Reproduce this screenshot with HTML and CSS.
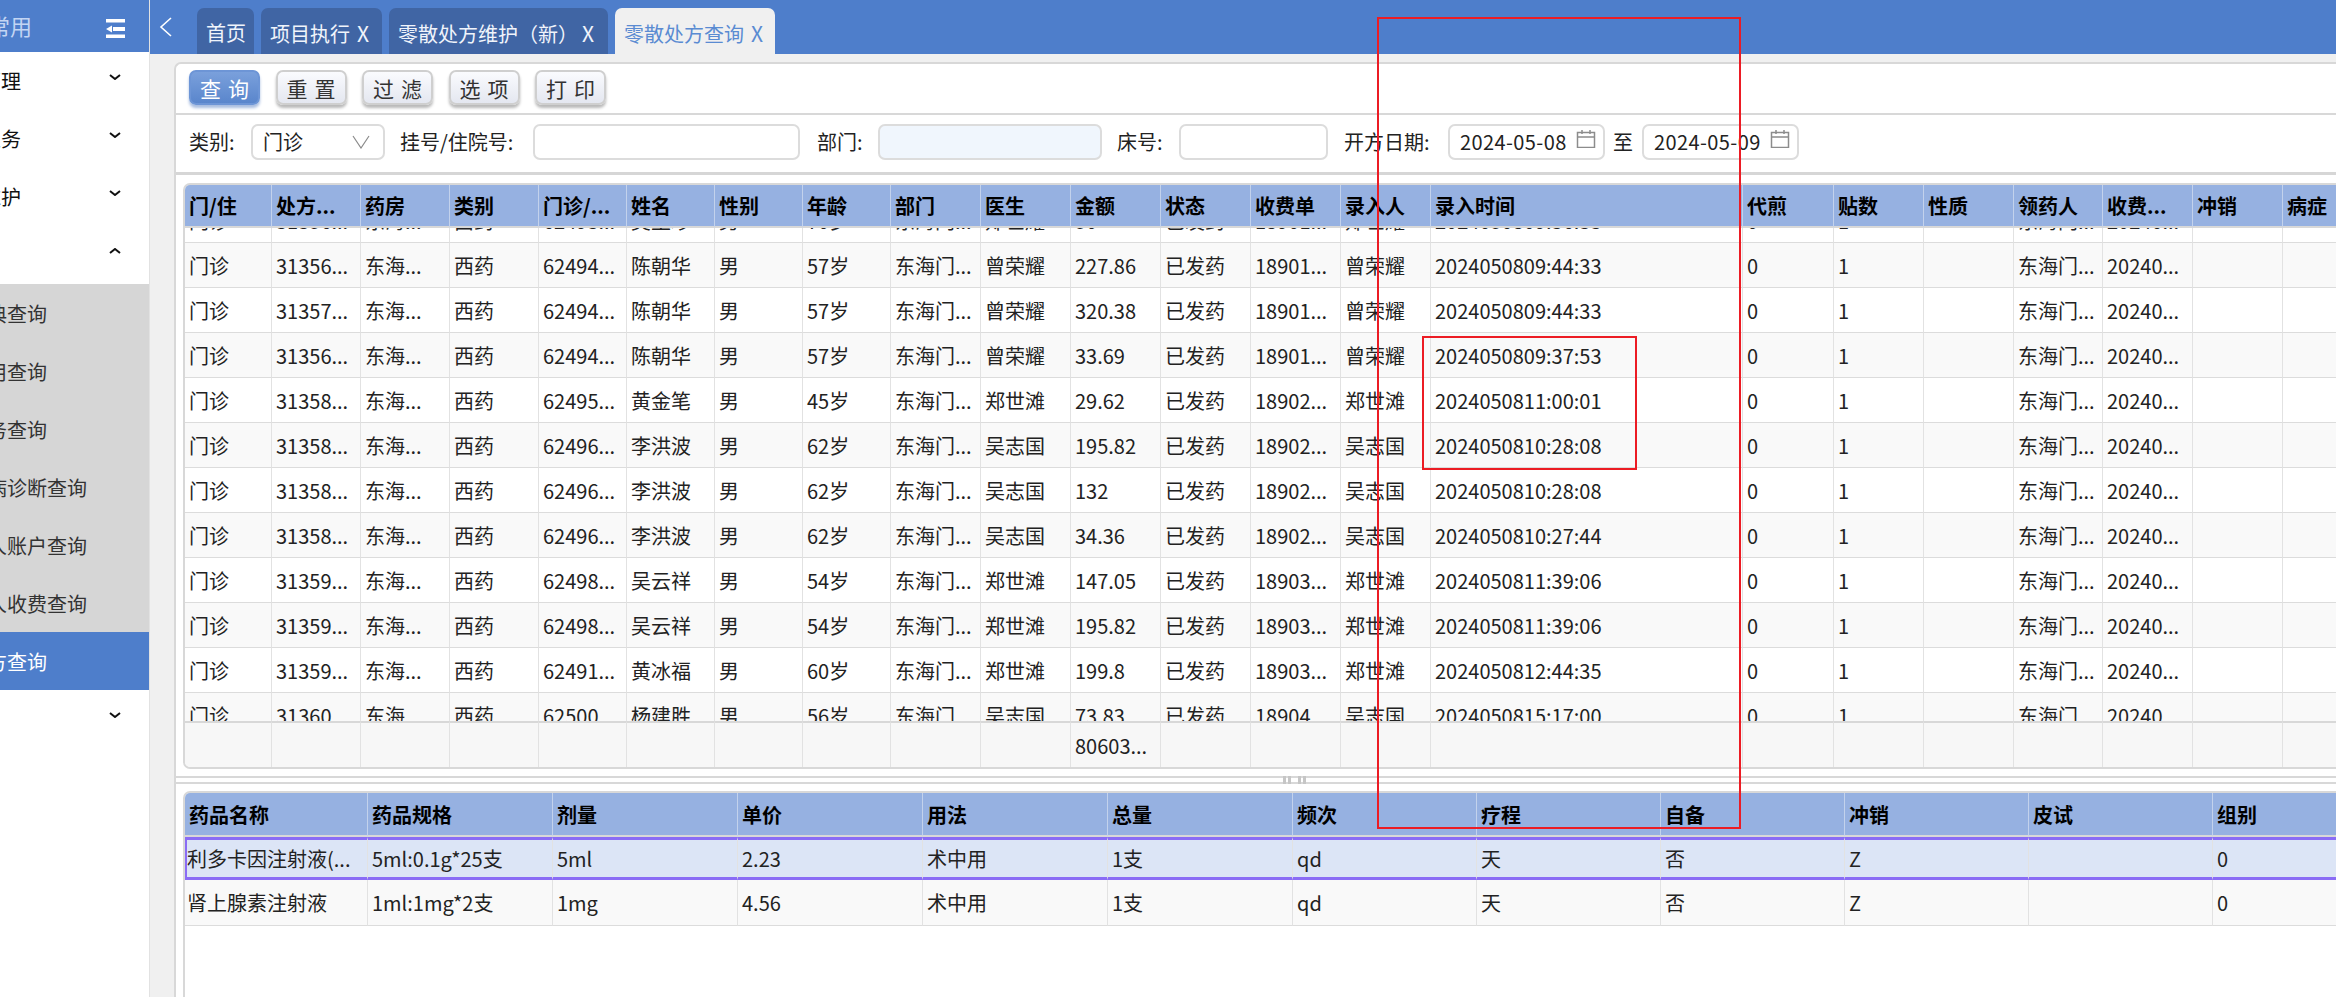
FILE: index.html
```html
<!DOCTYPE html>
<html lang="zh-CN">
<head>
<meta charset="utf-8">
<title>零散处方查询</title>
<link rel="stylesheet" href="styles.css">
</head>
<body>
<div class="app">
  <aside class="side">
    <div class="side-head">
      <span class="head-title">常用</span>
      <svg class="collapse" width="20" height="20" viewBox="0 0 20 20"><path class="fill-white" d="M1 0h19v3.500H1zM8 8h12v4H8zM1 15.500h19V19H1zM1 10l6-3.500v7z"/></svg>
    </div>
    <div class="group"><span class="group-name">门诊管理</span><svg class="chev" width="12" height="6" viewBox="0 0 12 6"><path d="M1 1l5 4 5-4"/></svg></div>
    <div class="group"><span class="group-name">门诊业务</span><svg class="chev" width="12" height="6" viewBox="0 0 12 6"><path d="M1 1l5 4 5-4"/></svg></div>
    <div class="group"><span class="group-name">字典维护</span><svg class="chev" width="12" height="6" viewBox="0 0 12 6"><path d="M1 1l5 4 5-4"/></svg></div>
    <div class="group"><span class="group-name">查询</span><svg class="chev" width="12" height="6" viewBox="0 0 12 6"><path d="M1 5l5-4 5 4"/></svg></div>
    <div class="item">字典查询</div>
    <div class="item">费用查询</div>
    <div class="item">药务查询</div>
    <div class="item">疾病诊断查询</div>
    <div class="item">病人账户查询</div>
    <div class="item">病人收费查询</div>
    <div class="item active">处方查询</div>
    <div class="group"><span class="group-name">其他</span><svg class="chev" width="12" height="6" viewBox="0 0 12 6"><path d="M1 1l5 4 5-4"/></svg></div>
  </aside>
  <main class="main">
    <nav class="topbar">
      <svg class="back" width="14" height="20" viewBox="0 0 14 20"><path d="M12 1L2 10l10 9"/></svg>
      <div class="tab t1">首页</div>
      <div class="tab t2">项目执行<span class="close">X</span></div>
      <div class="tab t3">零散处方维护（新）<span class="close">X</span></div>
      <div class="tab t4 current">零散处方查询<span class="close">X</span></div>
    </nav>
    <div class="content">
      <section class="panel">
        <div class="toolbar">
          <button class="btn primary">查询</button>
          <button class="btn">重置</button>
          <button class="btn">过滤</button>
          <button class="btn">选项</button>
          <button class="btn">打印</button>
        </div>
        <div class="filters">
          <label class="lbl l1">类别:</label>
          <div class="field f-select">门诊<svg class="caret" width="18" height="14" viewBox="0 0 18 14"><path d="M1 1l8 12 8-12"/></svg></div>
          <label class="lbl l2">挂号/住院号:</label>
          <div class="field f-reg"></div>
          <label class="lbl l3">部门:</label>
          <div class="field f-dept"></div>
          <label class="lbl l4">床号:</label>
          <div class="field f-bed"></div>
          <label class="lbl l5">开方日期:</label>
          <div class="field f-date">2024-05-08<svg class="cal" width="20" height="18" viewBox="0 0 20 18"><path d="M1.500 2.500h17v15h-17zM1.500 7h17M6 0v4M14 0v4"/></svg></div>
          <label class="lbl l6">至</label>
          <div class="field f-date">2024-05-09<svg class="cal" width="20" height="18" viewBox="0 0 20 18"><path d="M1.500 2.500h17v15h-17zM1.500 7h17M6 0v4M14 0v4"/></svg></div>
        </div>
        <div class="grid top-grid">
          <table class="tbl head">
            <colgroup><col class="w87"><col class="w89"><col class="w89"><col class="w89"><col class="w88"><col class="w88"><col class="w88"><col class="w88"><col class="w90"><col class="w90"><col class="w90"><col class="w90"><col class="w90"><col class="w90"><col class="w312"><col class="w91"><col class="w90"><col class="w90"><col class="w89"><col class="w90"><col class="w90"><col class="w90"></colgroup>
            <tr><th>门/住</th><th>处方...</th><th>药房</th><th>类别</th><th>门诊/...</th><th>姓名</th><th>性别</th><th>年龄</th><th>部门</th><th>医生</th><th>金额</th><th>状态</th><th>收费单</th><th>录入人</th><th>录入时间</th><th>代煎</th><th>贴数</th><th>性质</th><th>领药人</th><th>收费...</th><th>冲销</th><th>病症</th></tr>
          </table>
          <div class="scroll">
            <table class="tbl body">
              <colgroup><col class="w87"><col class="w89"><col class="w89"><col class="w89"><col class="w88"><col class="w88"><col class="w88"><col class="w88"><col class="w90"><col class="w90"><col class="w90"><col class="w90"><col class="w90"><col class="w90"><col class="w312"><col class="w91"><col class="w90"><col class="w90"><col class="w89"><col class="w90"><col class="w90"><col class="w90"></colgroup>
              <tr><td>门诊</td><td>31356...</td><td>东海...</td><td>西药</td><td>62493...</td><td>吴玉珍</td><td>男</td><td>70岁</td><td>东海门...</td><td>郑世耀</td><td>50</td><td>已发药</td><td>18901...</td><td>郑世耀</td><td>2024050809:36:33</td><td>0</td><td>1</td><td></td><td>东海门...</td><td>20240...</td><td></td><td></td></tr>
              <tr><td>门诊</td><td>31356...</td><td>东海...</td><td>西药</td><td>62494...</td><td>陈朝华</td><td>男</td><td>57岁</td><td>东海门...</td><td>曾荣耀</td><td>227.86</td><td>已发药</td><td>18901...</td><td>曾荣耀</td><td>2024050809:44:33</td><td>0</td><td>1</td><td></td><td>东海门...</td><td>20240...</td><td></td><td></td></tr>
              <tr><td>门诊</td><td>31357...</td><td>东海...</td><td>西药</td><td>62494...</td><td>陈朝华</td><td>男</td><td>57岁</td><td>东海门...</td><td>曾荣耀</td><td>320.38</td><td>已发药</td><td>18901...</td><td>曾荣耀</td><td>2024050809:44:33</td><td>0</td><td>1</td><td></td><td>东海门...</td><td>20240...</td><td></td><td></td></tr>
              <tr><td>门诊</td><td>31356...</td><td>东海...</td><td>西药</td><td>62494...</td><td>陈朝华</td><td>男</td><td>57岁</td><td>东海门...</td><td>曾荣耀</td><td>33.69</td><td>已发药</td><td>18901...</td><td>曾荣耀</td><td>2024050809:37:53</td><td>0</td><td>1</td><td></td><td>东海门...</td><td>20240...</td><td></td><td></td></tr>
              <tr><td>门诊</td><td>31358...</td><td>东海...</td><td>西药</td><td>62495...</td><td>黄金笔</td><td>男</td><td>45岁</td><td>东海门...</td><td>郑世滩</td><td>29.62</td><td>已发药</td><td>18902...</td><td>郑世滩</td><td>2024050811:00:01</td><td>0</td><td>1</td><td></td><td>东海门...</td><td>20240...</td><td></td><td></td></tr>
              <tr><td>门诊</td><td>31358...</td><td>东海...</td><td>西药</td><td>62496...</td><td>李洪波</td><td>男</td><td>62岁</td><td>东海门...</td><td>吴志国</td><td>195.82</td><td>已发药</td><td>18902...</td><td>吴志国</td><td>2024050810:28:08</td><td>0</td><td>1</td><td></td><td>东海门...</td><td>20240...</td><td></td><td></td></tr>
              <tr><td>门诊</td><td>31358...</td><td>东海...</td><td>西药</td><td>62496...</td><td>李洪波</td><td>男</td><td>62岁</td><td>东海门...</td><td>吴志国</td><td>132</td><td>已发药</td><td>18902...</td><td>吴志国</td><td>2024050810:28:08</td><td>0</td><td>1</td><td></td><td>东海门...</td><td>20240...</td><td></td><td></td></tr>
              <tr><td>门诊</td><td>31358...</td><td>东海...</td><td>西药</td><td>62496...</td><td>李洪波</td><td>男</td><td>62岁</td><td>东海门...</td><td>吴志国</td><td>34.36</td><td>已发药</td><td>18902...</td><td>吴志国</td><td>2024050810:27:44</td><td>0</td><td>1</td><td></td><td>东海门...</td><td>20240...</td><td></td><td></td></tr>
              <tr><td>门诊</td><td>31359...</td><td>东海...</td><td>西药</td><td>62498...</td><td>吴云祥</td><td>男</td><td>54岁</td><td>东海门...</td><td>郑世滩</td><td>147.05</td><td>已发药</td><td>18903...</td><td>郑世滩</td><td>2024050811:39:06</td><td>0</td><td>1</td><td></td><td>东海门...</td><td>20240...</td><td></td><td></td></tr>
              <tr><td>门诊</td><td>31359...</td><td>东海...</td><td>西药</td><td>62498...</td><td>吴云祥</td><td>男</td><td>54岁</td><td>东海门...</td><td>郑世滩</td><td>195.82</td><td>已发药</td><td>18903...</td><td>郑世滩</td><td>2024050811:39:06</td><td>0</td><td>1</td><td></td><td>东海门...</td><td>20240...</td><td></td><td></td></tr>
              <tr><td>门诊</td><td>31359...</td><td>东海...</td><td>西药</td><td>62491...</td><td>黄冰福</td><td>男</td><td>60岁</td><td>东海门...</td><td>郑世滩</td><td>199.8</td><td>已发药</td><td>18903...</td><td>郑世滩</td><td>2024050812:44:35</td><td>0</td><td>1</td><td></td><td>东海门...</td><td>20240...</td><td></td><td></td></tr>
              <tr><td>门诊</td><td>31360...</td><td>东海...</td><td>西药</td><td>62500...</td><td>杨建胜</td><td>男</td><td>56岁</td><td>东海门...</td><td>吴志国</td><td>73.83</td><td>已发药</td><td>18904...</td><td>吴志国</td><td>2024050815:17:00</td><td>0</td><td>1</td><td></td><td>东海门...</td><td>20240...</td><td></td><td></td></tr>
            </table>
          </div>
          <table class="tbl foot">
            <colgroup><col class="w87"><col class="w89"><col class="w89"><col class="w89"><col class="w88"><col class="w88"><col class="w88"><col class="w88"><col class="w90"><col class="w90"><col class="w90"><col class="w90"><col class="w90"><col class="w90"><col class="w312"><col class="w91"><col class="w90"><col class="w90"><col class="w89"><col class="w90"><col class="w90"><col class="w90"></colgroup>
            <tr><td></td><td></td><td></td><td></td><td></td><td></td><td></td><td></td><td></td><td></td><td>80603...</td><td></td><td></td><td></td><td></td><td></td><td></td><td></td><td></td><td></td><td></td><td></td></tr>
          </table>
        </div>
        <div class="splitter"><span class="grip"></span><span class="grip"></span><span class="grip gap"></span><span class="grip"></span></div>
        <div class="grid bottom-grid">
          <table class="tbl detail head">
            <colgroup><col class="w183"><col class="w185"><col class="w185"><col class="w185"><col class="w185"><col class="w185"><col class="w184"><col class="w184"><col class="w184"><col class="w184"><col class="w184"><col class="w184"></colgroup>
            <tr><th>药品名称</th><th>药品规格</th><th>剂量</th><th>单价</th><th>用法</th><th>总量</th><th>频次</th><th>疗程</th><th>自备</th><th>冲销</th><th>皮试</th><th>组别</th></tr>
            <tr class="sel"><td>利多卡因注射液(...</td><td>5ml:0.1g*25支</td><td>5ml</td><td>2.23</td><td>术中用</td><td>1支</td><td>qd</td><td>天</td><td>否</td><td>Z</td><td></td><td>0</td></tr>
            <tr class="plain"><td>肾上腺素注射液</td><td>1ml:1mg*2支</td><td>1mg</td><td>4.56</td><td>术中用</td><td>1支</td><td>qd</td><td>天</td><td>否</td><td>Z</td><td></td><td>0</td></tr>
          </table>
        </div>
      </section>
    </div>
  </main>
  <div class="mark mark-outer"></div>
  <div class="mark mark-inner"></div>
</div>
</body>
</html>
```
FILE: styles.css
```css
* { box-sizing: border-box; }
html, body { margin: 0; height: 100%; }
body {
  font-family: "Noto Sans CJK SC", "Noto Sans", sans-serif;
  font-size: 20px;
  color: #222;
  background: #f0f0f0;
  overflow: hidden;
}
.app { position: relative; display: flex; height: 997px; width: 2336px; overflow: hidden; }

/* sidebar */
.side { width: 150px; flex: none; background: #fff; border-right: 1px solid #e2e2e2; overflow: hidden; }
.side-head { height: 52px; background: #4e7ecb; display: flex; align-items: center; justify-content: space-between; padding-right: 24px; }
.head-title { margin-left: -12px; color: #c3d5f3; font-size: 22px; line-height: 52px; margin-top: -2px; }
.collapse { margin-top: 5px; }
.fill-white { fill: #fff; }
.group { height: 58px; display: flex; align-items: center; justify-content: space-between; padding-right: 28px; color: #111; }
.group-name { margin-left: -59px; line-height: 58px; }
.chev { fill: none; stroke: #111; stroke-width: 2; margin-top: -8px; }
.item { height: 58px; line-height: 60px; text-indent: -33px; background: #d6d6d6; color: #333; white-space: nowrap; }
.item.active { background: #4e7ecb; color: #fff; }

/* top */
.main { flex: 1; min-width: 0; display: flex; flex-direction: column; }
.topbar { height: 54px; flex: none; background: #4e7ecb; display: flex; align-items: flex-end; gap: 7px; padding-left: 9px; }
.back { fill: none; stroke: #fff; stroke-width: 1.600; align-self: flex-start; margin: 17px 17px 0 0; }
.tab { height: 46px; border-radius: 7px 7px 0 0; background: #4065a4; color: #f0f4fb; padding: 10px 0 0 9px; line-height: 30px; white-space: nowrap; }
.t1 { width: 57px; }
.t2 { width: 121px; }
.t3 { width: 219px; }
.t4 { width: 160px; }
.tab.current { background: #f0f0f0; color: #5a8bd2; }
.close { margin-left: 7px; font-size: 21px; }
.t3 .close { margin-left: 4px; }

.content { flex: 1; min-height: 0; padding: 8px 0 0 24px; background: #f0f0f0; display: flex; }
.panel { flex: 1; min-width: 0; background: #fff; border: 2px solid #d8d8d8; border-width: 2px 0 0 2px; border-radius: 7px 0 0 0; display: flex; flex-direction: column; overflow: hidden; }

/* toolbar */
.toolbar { height: 51px; flex: none; display: flex; gap: 15.500px; padding: 6px 0 0 13px; border-bottom: 2px solid #d8d8d8; }
.btn {
  width: 71px; height: 35px; padding: 0 0 0 7px;
  font: inherit; font-size: 21px; letter-spacing: 7px; color: #333; line-height: 30px;
  border: 2px solid #cfcfcf; border-radius: 7px;
  background: linear-gradient(#fafbfe, #e4e7f0);
  box-shadow: 0 3px 3px #b9b9b9;
}
.btn.primary { color: #fff; border-color: #6d95d6; background: linear-gradient(#7aa0dc, #5a86cc); box-shadow: 0 3px 3px #a8bde0; }

/* filters */
.filters { height: 60px; flex: none; display: flex; align-items: center; padding: 0 0 3px 13px; border-bottom: 3px solid #d6d6d6; }
.lbl { flex: none; color: #222; line-height: 36px; }
.l1 { width: 62px; }
.l2 { width: 133px; margin-left: 15px; }
.l3 { width: 61px; margin-left: 17px; }
.l4 { width: 62px; margin-left: 15px; }
.l5 { width: 104px; margin-left: 16px; }
.l6 { width: 29px; margin-left: 8px; }
.field { flex: none; height: 36px; border: 2px solid #dcdcdc; border-radius: 7px; background: #fff; display: flex; align-items: center; justify-content: space-between; line-height: 32px; }
.f-select { width: 134px; padding: 0 13px 0 10px; }
.f-reg { width: 267px; }
.f-dept { width: 224px; background: #f0f6fd; }
.f-bed { width: 149px; }
.f-date { width: 157px; padding: 0 7px 0 10px; letter-spacing: .4px; }
.caret { fill: none; stroke: #8a8a8a; stroke-width: 1.200; }
.cal { fill: none; stroke: #8c8c8c; stroke-width: 1.500; margin-top: -6px; }

/* grids */
.grid { flex: none; margin: 8px 0 0 7px; border: 2px solid #d8d8d8; border-width: 2px 0 0 2px; border-radius: 7px 0 0 0; overflow: hidden; background: #fff; }
.top-grid { border-bottom-width: 2px; border-bottom-left-radius: 7px; }
.tbl { border-collapse: separate; border-spacing: 0; table-layout: fixed; width: 2188px; }
.tbl.detail { width: 2212px; }
.tbl th, .tbl td { padding: 0 4px; overflow: hidden; white-space: nowrap; text-align: left; border-right: 1px solid #e2e2e2; }
.tbl th { height: 43px; font-weight: 700; color: #000; background: #96b1e1; border-right-color: #c3d2ec; border-bottom: 2px solid #d8d8d8; line-height: 41px; }
.tbl td { height: 45px; border-bottom: 1px solid #dcdcdc; line-height: 43px; padding-top: 1px; }
.body tr:nth-child(even) td { background: #f9f9f9; }
.scroll { height: 493px; overflow: hidden; }
.scroll .tbl { margin-top: -30px; }
.foot td { height: 45px; background: #f7f7f7; border-bottom: 0; border-top: 2px solid #d8d8d8; }

.w87 { width: 87px; } .w88 { width: 88px; } .w89 { width: 89px; } .w90 { width: 90px; } .w91 { width: 91px; } .w312 { width: 312px; }
.w183 { width: 183px; } .w184 { width: 184px; } .w185 { width: 185px; }

.splitter { flex: none; height: 8px; margin-top: 7px; padding-left: 76px; border: 2px solid #d8d8d8; border-width: 2px 0; display: flex; justify-content: center; gap: 2px; }
.grip { width: 3px; height: 8px; margin-top: -2px; background: #c6c6c6; }
.grip.gap { margin-left: 5px; }

.bottom-grid { flex: 1; border-radius: 7px 0 0 0; margin-top: 7px; }
.detail th { height: 44px; }
.sel td { height: 43px; background: #dce5f6; border-top: 3px solid #8a6cf5; border-bottom: 3px solid #8a6cf5; line-height: 34px; padding-top: 0; }
.sel td:first-child { border-left: 2px solid #8a6cf5; padding-left: 0; }
.plain td { height: 46px; background: #f9f9f9; line-height: 42px; }
.plain td:first-child { padding-left: 2px; }

/* annotation boxes drawn on top of the screenshot */
.mark { position: absolute; border: 2px solid #ec1c24; pointer-events: none; }
.mark-outer { left: 1377px; top: 17px; width: 364px; height: 812px; }
.mark-inner { left: 1422px; top: 336px; width: 215px; height: 134px; }
```
